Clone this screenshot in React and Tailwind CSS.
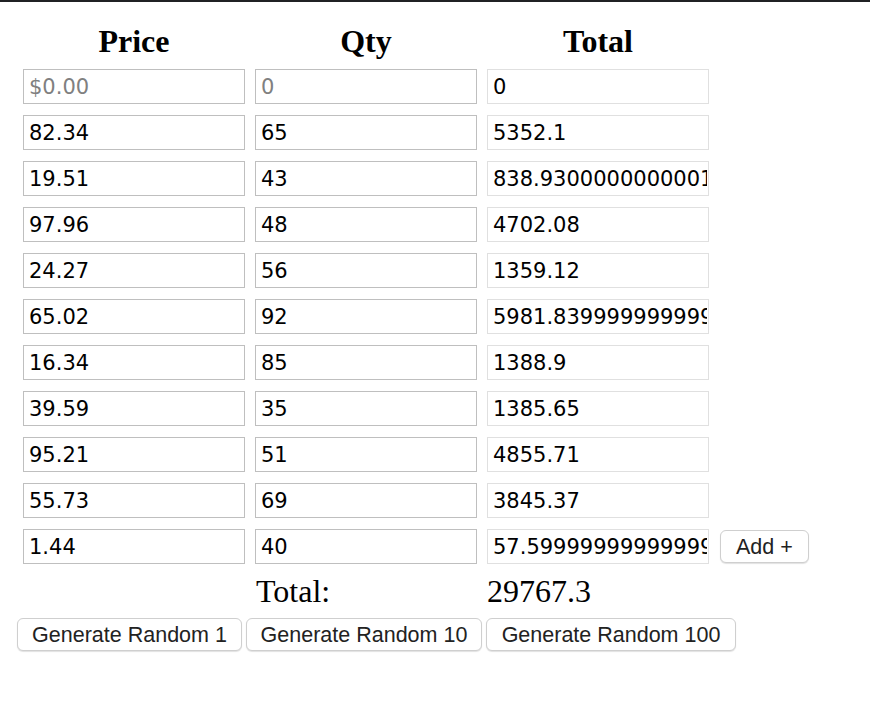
import React from "react";

const rows = [
  ["82.34", "65", "5352.1"],
  ["19.51", "43", "838.9300000000001"],
  ["97.96", "48", "4702.08"],
  ["24.27", "56", "1359.12"],
  ["65.02", "92", "5981.839999999999"],
  ["16.34", "85", "1388.9"],
  ["39.59", "35", "1385.65"],
  ["95.21", "51", "4855.71"],
  ["55.73", "69", "3845.37"],
  ["1.44", "40", "57.599999999999994"],
];

const inputFont = { fontFamily: '"DejaVu Sans", Arial, sans-serif' };
const btnFont = { fontFamily: '"Liberation Sans", Arial, sans-serif' };
const serif = { fontFamily: '"Liberation Serif", "Times New Roman", serif' };

// editable cell
const Field = ({ value, placeholder }) => (
  <input
    readOnly
    defaultValue={value}
    placeholder={placeholder}
    className="w-[222px] h-[35px] border border-[#bfbfbf] bg-white pl-[5px] pr-[1px] text-[21px] text-black placeholder:text-[#808080] outline-none"
    style={inputFont}
  />
);

// computed total cell
const TotalField = ({ value }) => (
  <input
    readOnly
    value={value}
    className="w-[222px] h-[35px] border border-[#e0e0e0] bg-white pl-[5px] pr-[1px] text-[21px] text-black outline-none"
    style={inputFont}
  />
);

const Button = ({ children, className = "" }) => (
  <button
    className={`h-[33px] rounded-[6px] border border-[#cfcfcf] bg-white text-[21.5px] text-[#222] shadow-[0_1px_1px_rgba(0,0,0,0.12)] ${className}`}
    style={btnFont}
  >
    {children}
  </button>
);

export default function App() {
  return (
    <div className="min-h-[706px] bg-white border-t-2 border-[#202124]">
      <div className="pt-[21px] pl-[23px]">
        {/* Header */}
        <div className="flex gap-[10px] mb-[9px] text-[32px] leading-[37px] font-bold text-black" style={serif}>
          <div className="w-[222px] text-center">Price</div>
          <div className="w-[222px] text-center">Qty</div>
          <div className="w-[222px] text-center">Total</div>
        </div>

        {/* Rows */}
        <div className="flex flex-col gap-[11px]">
          <div className="flex gap-[10px]">
            <Field placeholder="$0.00" />
            <Field placeholder="0" />
            <TotalField value="0" />
          </div>
          {rows.map((r, i) => (
            <div key={i} className="flex items-center gap-[10px]">
              <Field value={r[0]} />
              <Field value={r[1]} />
              <TotalField value={r[2]} />
              {i === rows.length - 1 && <Button className="ml-px px-[15px]">Add +</Button>}
            </div>
          ))}
        </div>

        {/* Grand total */}
        <div className="flex gap-[10px] mt-[9px] text-[32px] leading-[37px] text-black" style={serif}>
          <div className="w-[222px]" />
          <div className="w-[222px] pl-px">Total:</div>
          <div className="w-[222px]">29767.3</div>
        </div>
      </div>

      <div className="flex gap-[4px] pl-[17px] mt-[8px]">
        <Button className="w-[225px]">Generate Random 1</Button>
        <Button className="w-[236px]">Generate Random 10</Button>
        <Button className="w-[250px]">Generate Random 100</Button>
      </div>
    </div>
  );
}
